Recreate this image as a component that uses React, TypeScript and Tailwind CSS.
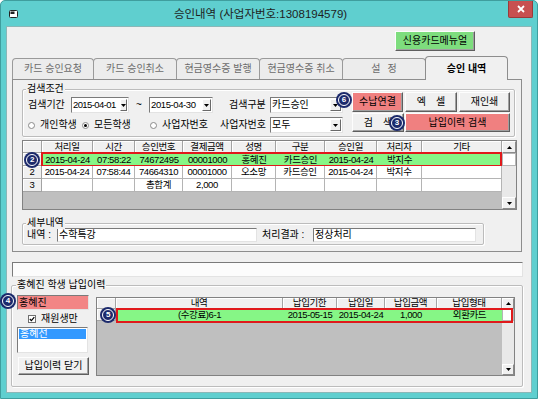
import React from "react";

type Kids = { children?: React.ReactNode; className?: string };

const sunken =
  "border border-t-[#7a7a7a] border-l-[#7a7a7a] border-r-[#e3e3e3] border-b-[#e3e3e3]";

const numText = "text-[9.5px] tracking-[-0.4px]";

function RaisedBtn({ children, className = "" }: Kids) {
  return (
    <button
      type="button"
      className={`flex items-center justify-center border border-t-[#fdfdfd] border-l-[#fdfdfd] border-r-[#5e5e5e] border-b-[#5e5e5e] shadow-[inset_-1px_-1px_0_#a0a0a0] text-[10px] leading-none text-black ${className}`}
    >
      {children}
    </button>
  );
}

function Badge({ n, className = "" }: { n: string; className?: string }) {
  return (
    <div
      className={`absolute z-20 flex h-[16px] w-[16px] items-center justify-center rounded-full bg-[#1c2a6c] ${className}`}
    >
      <div className="flex h-[12px] w-[12px] items-center justify-center rounded-full border-[1.5px] border-white text-[8px] font-bold leading-none text-white">
        {n}
      </div>
    </div>
  );
}

function Tri({ up = false }: { up?: boolean }) {
  return (
    <svg width="5" height="3" viewBox="0 0 5 3">
      <path d={up ? "M0 3H5L2.5 0Z" : "M0 0H5L2.5 3Z"} fill="#000" />
    </svg>
  );
}

function DropBtn({ className = "w-[11px]" }: { className?: string }) {
  return (
    <span
      className={`m-[1px] flex shrink-0 items-center justify-center border border-t-white border-l-white border-r-[#696969] border-b-[#696969] bg-[#f0f0f0] ${className}`}
    >
      <Tri />
    </span>
  );
}

function Combo({ value, className = "", btn, children }: { value: string; btn?: string } & Kids) {
  return (
    <div className={`relative flex h-[16px] items-stretch bg-white ${sunken} ${className}`}>
      <span className="flex flex-1 items-center overflow-hidden whitespace-nowrap pl-[1px]">{value}</span>
      <DropBtn className={btn} />
      {children}
    </div>
  );
}

function Radio({ checked = false, label, className = "" }: { checked?: boolean; label: string; className?: string }) {
  return (
    <div className={`flex items-center ${className}`}>
      <span className="flex h-[7px] w-[7px] items-center justify-center rounded-full border border-[#8a8a8a] bg-white">
        {checked && <span className="h-[3px] w-[3px] rounded-full bg-black" />}
      </span>
      <span className="ml-[5px]">{label}</span>
    </div>
  );
}

function GroupBox({ label, className = "", children, labelClass = "left-[3px]" }: { label: string; labelClass?: string } & Kids) {
  return (
    <div className={`relative rounded-[2px] border border-[#bcbcbc] shadow-[inset_1px_1px_0_#fff,1px_1px_0_#fff] ${className}`}>
      <span className={`absolute top-[-7px] bg-[#f0f0f0] px-[1px] leading-[12px] ${labelClass}`}>{label}</span>
      {children}
    </div>
  );
}

function VScroll({ className = "", arrowH, thumbH }: { className?: string; arrowH: string; thumbH: string }) {
  return (
    <div className={`flex flex-col bg-[#e9e9e9] ${className}`}>
      <span className={`flex items-center justify-center border border-t-white border-l-white border-r-[#8a8a8a] border-b-[#8a8a8a] bg-[#f0f0f0] ${arrowH}`}>
        <Tri up />
      </span>
      <span className={`border border-[#b5b5b5] bg-white ${thumbH}`} />
      <span className="flex-1" />
      <span className={`flex items-center justify-center border border-t-white border-l-white border-r-[#8a8a8a] border-b-[#8a8a8a] bg-[#f0f0f0] ${arrowH}`}>
        <Tri />
      </span>
    </div>
  );
}

const headCell =
  "flex items-center justify-center overflow-hidden whitespace-nowrap border-r border-b border-[#a3a3a3] bg-[#f0f0f0] shadow-[inset_1px_1px_0_#fff]";

const MAIN_HEAD = ["", "처리일", "시간", "승인번호", "결제금액", "성명", "구분", "승인일", "처리자", "기타"];
const MAIN_ROWS = [
  ["", "2015-04-24", "07:58:22", "74672495", "00001000", "홍혜진", "카드승인", "2015-04-24", "박지수", ""],
  ["2", "2015-04-24", "07:58:44", "74664310", "00001000", "오소망", "카드승인", "2015-04-24", "박지수", ""],
  ["3", "", "", "총합계", "2,000", "", "", "", "", ""],
];

function MainGrid() {
  return (
    <div className={`ml-[9px] mt-[3px] flex h-[70px] w-[495px] border border-[#828282] bg-[#bfbfbf] ${numText}`}>
      <div className="flex w-[479px] flex-col">
        <div className="grid h-[12px] grid-cols-[19px_51px_42px_48px_49px_44px_49px_52px_45px_80px]">
          {MAIN_HEAD.map((h, i) => (
            <div key={i} className={headCell}>
              {h}
            </div>
          ))}
        </div>
        {MAIN_ROWS.map((r, ri) => (
          <div key={ri} className="relative grid h-[13px] grid-cols-[19px_51px_42px_48px_49px_44px_49px_52px_45px_80px]">
            {r.map((c, ci) => (
              <div
                key={ci}
                className={
                  ci === 0
                    ? headCell
                    : ri === 0
                      ? "flex items-center justify-center overflow-hidden whitespace-nowrap bg-[#86f686]"
                      : "flex items-center justify-center overflow-hidden whitespace-nowrap border-r border-b border-[#b4b4b4] bg-white"
                }
              >
                {c}
              </div>
            ))}
            {ri === 0 && (
              <>
                <div className="pointer-events-none absolute left-[18px] top-[-1px] h-[15px] w-[461px] border-2 border-[#e0191b]" />
                <Badge n="2" className="left-[1px] top-[-1px]" />
              </>
            )}
          </div>
        ))}
      </div>
      <VScroll className="w-[14px]" arrowH="h-[12px]" thumbH="h-[13px]" />
    </div>
  );
}

const PAY_HEAD = ["", "내역", "납입기한", "납입일", "납입금액", "납입형태"];
const PAY_ROW = ["", "(수강료)6-1", "2015-05-15", "2015-04-24", "1,000", "외환카드"];

function PayGrid() {
  return (
    <div className={`ml-[7px] mt-[2px] flex h-[79px] w-[419px] border border-[#828282] bg-[#bfbfbf] ${numText}`}>
      <div className="flex w-[405px] flex-col">
        <div className="grid h-[11px] grid-cols-[19px_167px_54px_48px_52px_65px]">
          {PAY_HEAD.map((h, i) => (
            <div key={i} className={headCell}>
              {h}
            </div>
          ))}
        </div>
        <div className="relative grid h-[12px] grid-cols-[19px_167px_54px_48px_52px_65px]">
          {PAY_ROW.map((c, ci) => (
            <div
              key={ci}
              className={ci === 0 ? headCell : "flex items-center justify-center overflow-hidden whitespace-nowrap bg-[#86f686]"}
            >
              {c}
            </div>
          ))}
          <div className="pointer-events-none absolute left-[19px] top-[-1px] h-[15px] w-[397px] border-2 border-[#e0191b]" />
          <Badge n="5" className="left-[3px] top-[-2px]" />
        </div>
      </div>
      <VScroll className="w-[12px]" arrowH="h-[11px]" thumbH="h-[12px]" />
    </div>
  );
}

const TABS = ["카드 승인요청", "카드 승인취소", "현금영수증 발행", "현금영수증 취소"];

function TabStrip() {
  return (
    <div className="ml-[5px] mt-[5px] flex h-[23px] items-end">
      {TABS.map((t, i) => (
        <div
          key={t}
          className={`flex h-[21px] items-center justify-center rounded-t-[4px] border border-b-0 border-[#9a9a9a] bg-[#ececec] text-[#6b6b6b] ${i === 0 ? "w-[82px]" : "-ml-px w-[84px]"}`}
        >
          {t}
        </div>
      ))}
      <div className="-ml-px flex h-[21px] w-[84px] items-center justify-center gap-[7px] rounded-t-[4px] border border-b-0 border-[#9a9a9a] bg-[#ececec] text-[#6b6b6b]">
        <span>설</span>
        <span>정</span>
      </div>
      <div className="relative z-10 -mb-px -ml-px flex h-[24px] w-[83px] items-center justify-center rounded-t-[4px] border border-b-0 border-[#8d8d8d] bg-[#f0f0f0] font-bold">
        승인 내역
      </div>
    </div>
  );
}

function TitleBar() {
  return (
    <div className="flex h-[26px] items-center">
      <div className="flex pl-[8px]">
        <svg width="9" height="8" viewBox="0 0 9 8">
          <rect x="0.5" y="0.5" width="8" height="7" rx="1" fill="#fff" stroke="#222" />
          <rect x="1.5" y="1.5" width="4" height="2.5" fill="#222" />
        </svg>
      </div>
      <div className="flex-1 pr-[5px] text-center text-[11.5px] leading-[14px] text-[#1e1e1e]">
        승인내역 (사업자번호:1308194579)
      </div>
      <div className="mr-[4px] flex h-[17px] w-[25px] self-start items-center justify-center rounded-b-[2px] border border-t-0 border-[#9b3a3a] bg-[#c75050]">
        <svg width="8" height="8" viewBox="0 0 8 8">
          <path d="M1 1L7 7M7 1L1 7" stroke="#fff" strokeWidth="1.8" />
        </svg>
      </div>
    </div>
  );
}

export default function App() {
  return (
    <div className="h-[402px] w-[541px] overflow-hidden bg-white font-[family-name:'Liberation_Sans','Noto_Sans_CJK_KR',sans-serif] text-[10px] leading-[12px] text-black">
      <div className="flex h-[399px] w-[538px] flex-col rounded-t-[5px] border border-[#3f9e9e] bg-[#5fcfcf]">
        <TitleBar />
        <div className="mx-[6px] flex h-[365px] flex-col bg-[#f0f0f0] shadow-[0_0_0_1px_#8ab7b7]">
          {/* manual button */}
          <div className="mt-[4px] flex h-[20px] justify-end pr-[56px]">
            <RaisedBtn className="w-[80px] bg-[#7edd7e]">신용카드메뉴얼</RaisedBtn>
          </div>

          <TabStrip />

          {/* tab panel */}
          <div className="ml-[5px] flex h-[173px] w-[510px] flex-col border border-[#8d8d8d] bg-[#f0f0f0]">
            <GroupBox className="ml-[9px] mt-[9px] h-[48px] w-[493px]" label="검색조건">
              <div className="flex pl-[5px] pt-[2px]">
                <div className="mt-[3px] flex w-[315px] flex-col">
                  <div className="flex h-[20px] items-center">
                    <span className="w-[43px]">검색기간</span>
                    <Combo value="2015-04-01" btn="w-[7px]" className="w-[58px] text-[9.5px] tracking-[-0.6px]" />
                    <span className="w-[20px] text-center">~</span>
                    <Combo value="2015-04-30" btn="w-[9px]" className="w-[64px] text-[9.5px] tracking-[-0.4px]" />
                    <span className="ml-[16px] w-[41px]">검색구분</span>
                    <Combo value="카드승인" className="w-[73px]">
                      <Badge n="6" className="left-[65px] top-[-6px]" />
                    </Combo>
                  </div>
                  <div className="flex h-[20px] items-center">
                    <Radio label="개인학생" className="w-[54px]" />
                    <Radio label="모든학생" checked className="w-[68px]" />
                    <Radio label="사업자번호" className="w-[70px]" />
                    <span className="w-[50px]">사업자번호</span>
                    <Combo value="모두" className="w-[73px]" />
                  </div>
                </div>
                <div className="ml-[9px] flex w-[158px] flex-col gap-y-[1px]">
                  <div className="flex h-[20px] gap-x-[2px]">
                    <RaisedBtn className="w-[51px] bg-[#f08080]">수납연결</RaisedBtn>
                    <RaisedBtn className="w-[52px] gap-[10px] bg-[#f0f0f0]">
                      <span>엑</span>
                      <span>셀</span>
                    </RaisedBtn>
                    <RaisedBtn className="w-[51px] bg-[#f0f0f0]">재인쇄</RaisedBtn>
                  </div>
                  <div className="flex h-[19px] gap-x-[1px]">
                    <RaisedBtn className="relative w-[52px] gap-[10px] bg-[#f0f0f0]">
                      <span>검</span>
                      <span>색</span>
                      <Badge n="3" className="left-[36px] top-[1px]" />
                    </RaisedBtn>
                    <RaisedBtn className="w-[105px] bg-[#f08080]">납입이력 검색</RaisedBtn>
                  </div>
                </div>
              </div>
            </GroupBox>

            <MainGrid />

            <GroupBox className="ml-[9px] mt-[13px] h-[22px] w-[462px]" label="세부내역">
              <div className="flex items-center pl-[4px] pt-[4px]">
                <span className="w-[30px]">내역 :</span>
                <div className={`flex h-[14px] w-[200px] items-center bg-white pl-[1px] ${sunken}`}>수학특강</div>
                <span className="ml-[5px] w-[51px]">처리결과 :</span>
                <div className={`flex h-[14px] w-[163px] items-center bg-white pl-[1px] ${sunken}`}>정상처리</div>
              </div>
            </GroupBox>
          </div>

          {/* message box */}
          <div className={`ml-[5px] mt-[10px] h-[15px] w-[511px] bg-[#fcfcfc] ${sunken}`} />

          <GroupBox className="ml-[4px] mt-[8px] h-[102px] w-[512px]" label="홍혜진 학생 납입이력" labelClass="left-[4px]">
            <div className="flex pl-[5px] pt-[9px]">
              <div className="flex w-[72px] flex-col">
                <div className={`relative flex h-[15px] items-center bg-[#f28585] pl-[1px] ${sunken}`}>
                  홍혜진
                  <Badge n="4" className="left-[-18px] top-[-3px]" />
                </div>
                <div className="mt-[4px] flex h-[10px] items-center pl-[11px]">
                  <span className="flex h-[8px] w-[8px] items-center justify-center border border-[#707070] bg-white">
                    <svg width="6" height="6" viewBox="0 0 6 6">
                      <path d="M0.8 3L2.4 4.6L5.3 1.2" stroke="#000" strokeWidth="1.2" fill="none" />
                    </svg>
                  </span>
                  <span className="ml-[5px]">재원생만</span>
                </div>
                <div className={`mt-[3px] h-[26px] w-[71px] bg-white p-px ${sunken}`}>
                  <div className="flex h-[10px] items-center bg-[#3399ff] pl-[1px] text-white">홍혜선</div>
                </div>
                <RaisedBtn className="ml-px mt-[4px] h-[18px] w-[71px] bg-[#f0f0f0]">납입이력 닫기</RaisedBtn>
              </div>
              <PayGrid />
            </div>
          </GroupBox>
        </div>
      </div>
    </div>
  );
}
